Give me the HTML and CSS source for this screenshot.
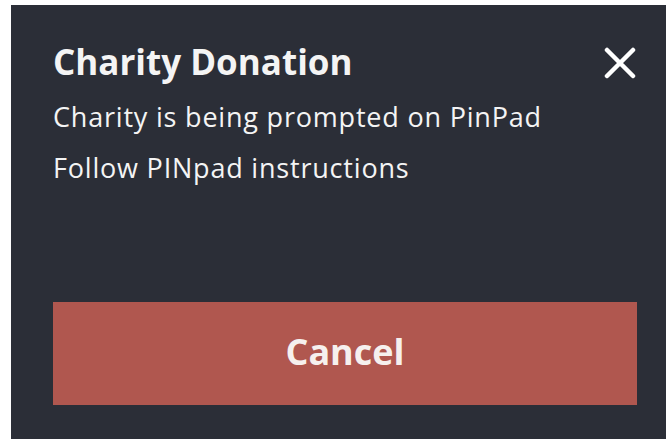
FILE: index.html
```html
<!DOCTYPE html>
<html lang="en">
<head>
<meta charset="utf-8">
<title>Charity Donation</title>
<link rel="stylesheet" href="styles.css">
</head>
<body>
  <div class="dialog">
    <header class="dialog-header">
      <h1 class="dialog-title">Charity Donation</h1>
      <button class="close-btn" aria-label="Close">
        <svg width="32" height="32" viewBox="0 0 32 32">
          <path d="M3 3 L29 29 M29 3 L3 29" stroke="#fff" stroke-width="4.5" stroke-linecap="round" fill="none"/>
        </svg>
      </button>
    </header>
    <p class="dialog-text">Charity is being prompted on PinPad</p>
    <p class="dialog-text">Follow PINpad instructions</p>
    <div class="dialog-actions">
      <button class="cancel-btn">Cancel</button>
    </div>
  </div>
</body>
</html>
```

FILE: styles.css
```css
html, body {
  margin: 0;
  height: 100%;
}

body {
  background: #ffffff;
  padding: 5px 2px 0 11px;
  box-sizing: border-box;
  font-family: "Open Sans", "Noto Sans", sans-serif;
}

.dialog {
  height: 100%;
  background: #2b2e37;
  color: #f4f4f4;
  padding: 36px 30px 0 42px;
  box-sizing: border-box;
  display: flex;
  flex-direction: column;
}

.dialog-header {
  display: flex;
  justify-content: space-between;
  align-items: flex-start;
}

.dialog-title {
  margin: 0;
  font-size: 35px;
  font-weight: 700;
  line-height: 42px;
}

.close-btn {
  background: none;
  border: 0;
  padding: 0;
  margin-top: 6px;
  width: 32px;
  height: 32px;
  cursor: pointer;
}

.close-btn svg {
  display: block;
}

.dialog-text {
  margin: 16px 0 0;
  font-size: 27px;
  line-height: 36px;
  letter-spacing: 0.8px;
}

.dialog-text + .dialog-text {
  margin-top: 15px;
}

.dialog-actions {
  margin-top: auto;
  padding-bottom: 34px;
}

.cancel-btn {
  display: block;
  width: 584px;
  height: 103px;
  padding: 0 0 4px;
  background: #b0574f;
  border: 0;
  color: #f6f0ee;
  font-family: inherit;
  font-size: 36px;
  font-weight: 700;
  cursor: pointer;
}
```
